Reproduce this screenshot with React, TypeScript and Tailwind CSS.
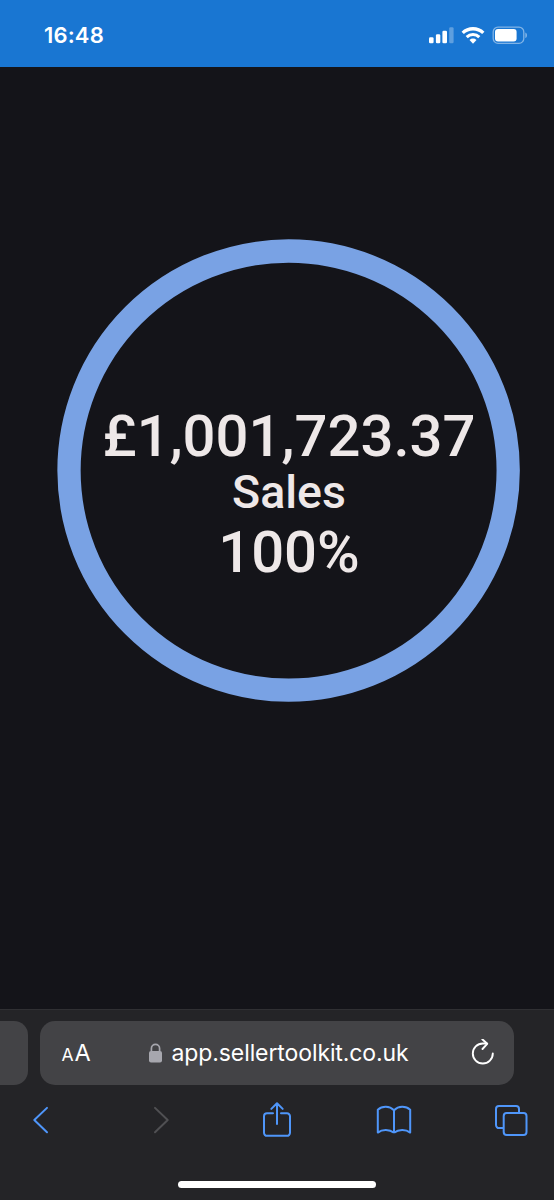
function StatusBar() {
  return (
    <header className="flex h-[67px] shrink-0 items-start justify-between bg-[#1976d2] pl-[44px] pr-[26px] text-white">
      <span className="mt-[20px] text-[22px] leading-[31px] font-semibold tracking-[0.15px]">16:48</span>
      <svg className="mt-[24px]" width="99" height="22" viewBox="0 0 99 22" fill="none">
        <rect x="0" y="13.3" width="4.6" height="6" rx="1.3" fill="#fff" />
        <rect x="6.9" y="10.3" width="4.4" height="9" rx="1.3" fill="#fff" />
        <rect x="13.4" y="6.8" width="4.6" height="12.5" rx="1.3" fill="#fff" />
        <rect x="20.2" y="3.2" width="4.4" height="16.1" rx="1.3" fill="#fff" opacity="0.3" />
        <g transform="translate(44 19.5)">
          <path d="M-10.3-10.6A14.8 14.8 0 0 1 10.3-10.6" stroke="#fff" strokeWidth="3.3" />
          <path d="M-6.3-6.4A9 9 0 0 1 6.3-6.4" stroke="#fff" strokeWidth="3.1" />
          <path d="M0 .2-3.5-3.5A5 5 0 0 1 3.5-3.5Z" fill="#fff" />
        </g>
        <rect x="64.2" y="3.1" width="30.6" height="16.2" rx="4.8" stroke="#fff" strokeOpacity="0.45" strokeWidth="1.3" />
        <rect x="66" y="5" width="21.6" height="12.4" rx="3" fill="#fff" />
        <path d="M96.4 8.4c2 .8 2 4.8 0 5.6Z" fill="#fff" opacity="0.5" />
      </svg>
    </header>
  );
}

function SalesRing() {
  return (
    <main className="flex h-[942px] shrink-0 justify-center bg-[#141419] pt-[172px] pl-[23px]">
      <section className="relative flex size-[463px] flex-col items-center pt-[165px] pl-px font-[Roboto,sans-serif] font-medium whitespace-nowrap text-[#eee8e8]">
        <svg className="absolute inset-0" width="463" height="463" viewBox="0 0 463 463" fill="none">
          <circle cx="231.6" cy="231.6" r="219.6" stroke="#79a2e4" strokeWidth="23.3" />
        </svg>
        <p className="text-[58px] leading-[65px]">£1,001,723.37</p>
        <p className="text-[46.5px] leading-[47px]">Sales</p>
        <p className="text-[58px] leading-[73px]">100%</p>
      </section>
    </main>
  );
}

function AddressRow() {
  return (
    <div className="flex h-16 gap-3">
      <div className="w-7 rounded-r-[14px] bg-[#434346]" />
      <div className="flex w-[474px] items-center rounded-[15px] bg-[#434346] pl-[21.5px] text-white">
        <span className="flex w-[86.5px] items-baseline gap-px pt-[3px] leading-7">
          <span className="text-[17.5px]">A</span>
          <span className="text-[23.5px]">A</span>
        </span>
        <svg width="15" height="20" viewBox="0 0 15 20" fill="none">
          <rect x="1" y="8" width="13" height="11.5" rx="2" fill="#a7a7ae" />
          <path d="M3.4 8.6V5.4a4.1 4.1 0 0 1 8.2 0v3.2" stroke="#a7a7ae" strokeWidth="1.7" />
        </svg>
        <span className="ml-[8.5px] w-[300px] pt-px text-[23px] leading-7 tracking-[-0.1px]">app.sellertoolkit.co.uk</span>
        <svg className="-ml-px shrink-0" width="24" height="28" viewBox="0 0 24 28" fill="none" stroke="#fff" strokeWidth="1.9" strokeLinecap="round" strokeLinejoin="round">
          <path d="M21.8 14.5A10 10 0 1 1 11.8 4.5h4" />
          <path d="m11.3 0.2 4.9 4.6-4.7 5.2" />
        </svg>
      </div>
    </div>
  );
}

function Toolbar() {
  return (
    <nav className="mt-4 flex h-[38px] items-center pl-[32px] text-[#4f96fa]">
      <svg width="18" height="38" viewBox="0 0 18 38" fill="none" stroke="currentColor" strokeWidth="2" strokeLinecap="round" strokeLinejoin="round">
        <path d="M15 6.9 2.3 19 15 31.2" />
      </svg>
      <svg className="ml-[102px]" width="18" height="38" viewBox="0 0 18 38" fill="none" stroke="#505053" strokeWidth="2" strokeLinecap="round" strokeLinejoin="round">
        <path d="M3 6.9 15.7 19 3 31.2" />
      </svg>
      <svg className="ml-[92px]" width="30" height="38" viewBox="0 0 30 38" fill="none" stroke="currentColor" strokeWidth="2" strokeLinecap="round" strokeLinejoin="round">
        <path d="M11 12.3H5a3 3 0 0 0-3 3v16.5a3 3 0 0 0 3 3h20a3 3 0 0 0 3-3V15.300a3 3 0 0 0-3-3h-6M15 23V2.500M9.300 7.900 15 2.200l5.700 5.700" />
      </svg>
      <svg className="ml-[84px]" width="36" height="38" viewBox="0 0 36 38" fill="none" stroke="currentColor" strokeWidth="2" strokeLinejoin="round">
        <path d="M18 9.3C13.5 4.8 6.200 4.8 1.8 8.8v22.8C6.2 28.2 13.5 28.2 18 31.8M18 9.3C22.5 4.8 29.8 4.8 34.2 8.8v22.8C29.8 28.2 22.5 28.2 18 31.8M18 9.3v22.5" />
      </svg>
      <svg className="ml-[82px]" width="34" height="38" viewBox="0 0 34 38" fill="none" stroke="currentColor" strokeWidth="2" strokeLinejoin="round">
        <rect x="9.7" y="12" width="22.8" height="22" rx="3" />
        <path d="M9.5 27.1H5a3 3 0 0 1-3-3V8a3 3 0 0 1 3-3h17a3 3 0 0 1 3 3v4" />
      </svg>
    </nav>
  );
}

export default function App() {
  return (
    <div className="flex h-[1200px] w-[554px] flex-col overflow-hidden bg-[#141419] font-[Inter,sans-serif]">
      <StatusBar />
      <SalesRing />
      <footer className="flex h-[191px] shrink-0 flex-col border-t border-[#303033] bg-[#242427] pt-[10.5px]">
        <AddressRow />
        <Toolbar />
        <div className="mt-[42.5px] h-[7px] w-[198px] self-center rounded-full bg-white" />
      </footer>
    </div>
  );
}
